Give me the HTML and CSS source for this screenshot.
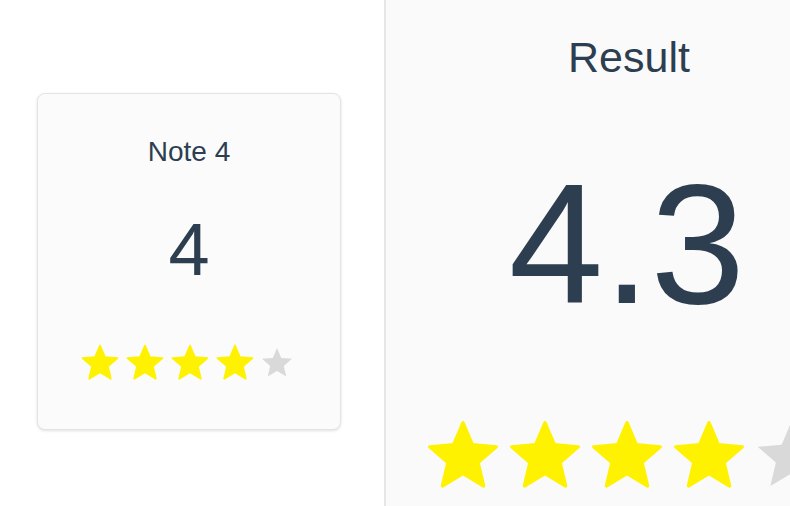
FILE: index.html
```html
<!DOCTYPE html>
<html lang="en">
<head>
<meta charset="utf-8">
<title>Rating</title>
<link rel="stylesheet" href="styles.css">
</head>
<body>
<svg width="0" height="0" class="defs" aria-hidden="true">
  <defs>
    <path id="star" d="M12 17.27L18.18 21l-1.64-7.03L22 9.24l-7.19-.61L12 2 9.19 8.63 2 9.24l5.46 4.73L5.82 21z"/>
  </defs>
</svg>
<div class="page">
  <section class="left">
    <div class="card">
      <div class="card-title">Note 4</div>
      <div class="card-value">4</div>
      <div class="stars small">
        <svg class="star on" viewBox="0 0 24 24"><use href="#star"/></svg>
        <svg class="star on" viewBox="0 0 24 24"><use href="#star"/></svg>
        <svg class="star on" viewBox="0 0 24 24"><use href="#star"/></svg>
        <svg class="star on" viewBox="0 0 24 24"><use href="#star"/></svg>
        <svg class="star off" viewBox="0 0 24 24"><use href="#star"/></svg>
      </div>
    </div>
  </section>
  <section class="right">
    <div class="result-title">Result</div>
    <div class="result-value">4.3</div>
    <div class="stars large">
      <svg class="star on" viewBox="0 0 24 24"><use href="#star"/></svg>
      <svg class="star on" viewBox="0 0 24 24"><use href="#star"/></svg>
      <svg class="star on" viewBox="0 0 24 24"><use href="#star"/></svg>
      <svg class="star on" viewBox="0 0 24 24"><use href="#star"/></svg>
      <svg class="star off" viewBox="0 0 24 24"><use href="#star"/></svg>
    </div>
  </section>
</div>
</body>
</html>
```
FILE: styles.css
```css
html, body {
  margin: 0;
  padding: 0;
  background: #ffffff;
  overflow: hidden;
}
.defs {
  position: absolute;
  width: 0;
  height: 0;
}
.page {
  display: flex;
  width: 790px;
  height: 506px;
  overflow: hidden;
  font-family: "Liberation Sans", Arial, Helvetica, sans-serif;
  color: #2c3e50;
}
.left {
  flex: 0 0 384px;
  background: #ffffff;
}
.card {
  box-sizing: border-box;
  margin: 93px 0 0 37px;
  width: 304px;
  height: 337px;
  background: #fbfbfb;
  border: 1px solid #e4e4e4;
  border-radius: 8px;
  box-shadow: 0 1px 3px rgba(0, 0, 0, 0.12);
  display: flex;
  flex-direction: column;
  align-items: center;
  padding-top: 42px;
}
.card-title {
  font-size: 28px;
  line-height: 32px;
}
.card-value {
  font-size: 74px;
  line-height: 74px;
  margin-top: 45px;
}
.stars {
  display: flex;
  align-items: center;
}
.stars.small {
  margin-top: 55px;
  gap: 3px;
  margin-left: -4px;
}
.star {
  display: block;
  overflow: visible;
}
.star.on {
  fill: #fff200;
  stroke: #fff200;
  stroke-width: 1;
  stroke-linejoin: round;
}
.star.off {
  fill: #d9d9d9;
}
.stars.small .star {
  width: 42px;
  height: 42px;
}
.stars.small .star.off {
  width: 36px;
  height: 36px;
}
.right {
  flex: 0 0 482px;
  background: #fafafa;
  border-left: 2px solid #e6e6e6;
  display: flex;
  flex-direction: column;
  align-items: center;
  padding-top: 33px;
}
.result-title {
  font-size: 43px;
  line-height: 48px;
  margin-left: 4px;
}
.result-value {
  font-size: 170px;
  line-height: 168px;
  margin-top: 79px;
}
.stars.large {
  margin-top: 88px;
  gap: 2px;
}
.stars.large .star {
  width: 80px;
  height: 80px;
  flex: 0 0 80px;
}
```
